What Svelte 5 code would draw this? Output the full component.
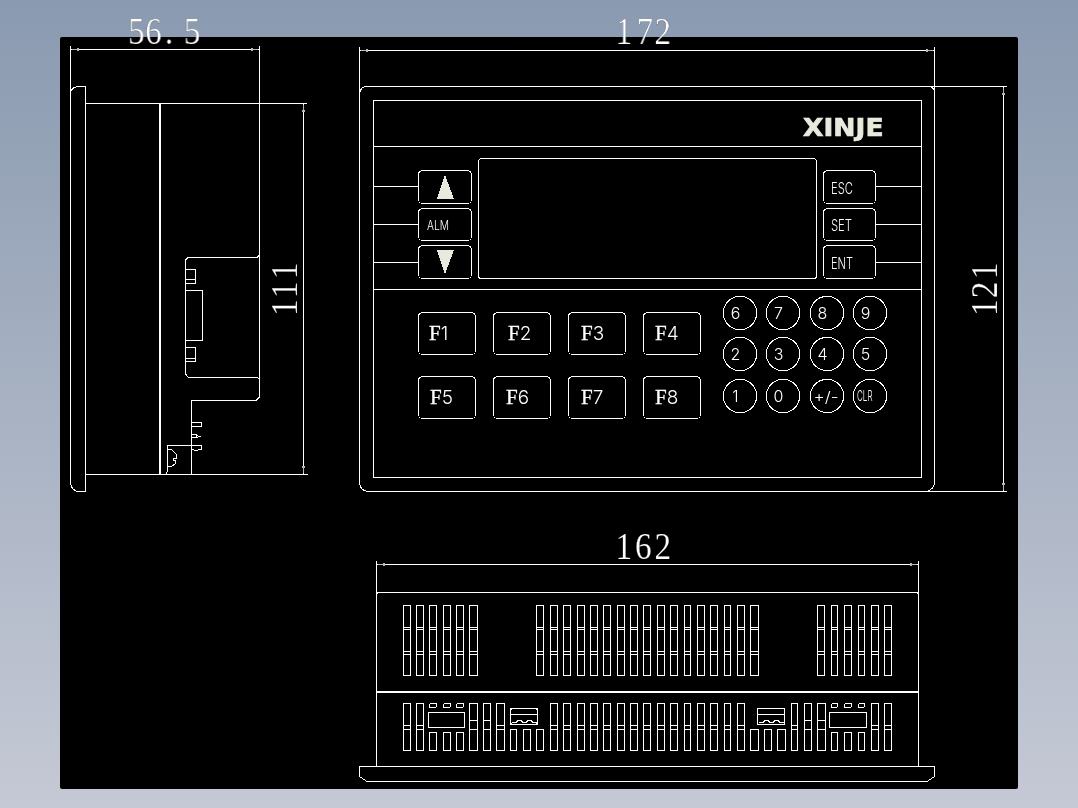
<script>
	// pixel columns [left, right] of the vent slots, read off the drawing
	const leftVents = [[403,410],[416,423],[429,436],[443,450],[456,463],[469,477]];
	const midVents = [[536,543],[550,557],[563,570],[577,584],[590,597],[603,610],[617,624],[630,637],[643,650],[657,664],[670,677],[684,690],[697,704],[710,717],[724,730],[737,744],[750,758]];
	const rightVents = [[817,824],[831,837],[844,851],[858,864],[871,878],[884,891]];
	const topVents = [...leftVents, ...midVents, ...rightVents];

	// lower row: tall slots with two bars each
	const lowSlots = [
		[403,410,725],[416,423,725],
		[469,477,720],[483,490,720],[496,504,725],
		...midVents.slice(1, 16).map(([a, b]) => [a, b, 725]),
		[791,797,725],[804,811,720],[817,825,720],
		[871,878,725],[884,891,725]
	];
	const shortSlots = [
		[429,436,732],[443,450,732],[456,463,732],
		[510,516,729],[523,530,729],[536,543,729],
		[750,758,729],[764,771,729],[777,785,729],
		[831,837,732],[844,851,732],[858,864,732]
	];
	const leds = [[429,436],[443,450],[456,463],[831,837],[844,851],[858,864]];

	const sideKeys = [
		{ x: 418, w: 53, y: 170, h: 33 },
		{ x: 418, w: 53, y: 208, h: 32 },
		{ x: 418, w: 53, y: 245, h: 33 },
		{ x: 823, w: 52, y: 170, h: 33 },
		{ x: 823, w: 52, y: 208, h: 32 },
		{ x: 823, w: 52, y: 245, h: 33 }
	];
	const sideLabels = [
		{ t: 'ALM', x: 427, y: 229.5, len: 22, cls: 'small' },
		{ t: 'ESC', x: 831, y: 193.5, len: 22, cls: '' },
		{ t: 'SET', x: 831, y: 230.5, len: 21, cls: '' },
		{ t: 'ENT', x: 831, y: 268.5, len: 22, cls: '' }
	];

	const fKeys = [
		{ n: 1, x: 418, y: 312, tx: 429 },
		{ n: 2, x: 493, y: 312, tx: 508 },
		{ n: 3, x: 568, y: 312, tx: 581 },
		{ n: 4, x: 643, y: 312, tx: 655 },
		{ n: 5, x: 418, y: 376, tx: 430 },
		{ n: 6, x: 493, y: 376, tx: 506 },
		{ n: 7, x: 568, y: 376, tx: 581 },
		{ n: 8, x: 643, y: 376, tx: 655 }
	];

	const padX = [740, 783, 827, 870];
	const padY = [313, 354, 396];
	const padRows = [
		['6', '7', '8', '9'],
		['2', '3', '4', '5'],
		['1', '0', '+/-', 'CLR']
	];
</script>

<div class="viewport">
	<svg class="drawing" viewBox="60 37 958 752" width="958" height="752">
		<!-- side view -->
		<g class="line">
			<path d="M70.5 46V483Q71 489 77 491.5H85.5V86.5H77Q71 88 70.5 93" />
			<path d="M85.5 103.5H307M85.5 474.5H308" />
			<path d="M259.5 46V397L256 400.5H191.5V474" />
			<path d="M259.5 255L257 257.5H188L185.5 260V374L188.5 377.5H257L259.5 379" />
			<path d="M185.5 269.5H195.5V283.5H185.5M185.5 279.5H195.5" />
			<path d="M185.5 290.5H202.5V340.5H185.5" />
			<path d="M185.5 347.5H195.5V361.5H185.5M185.5 358.5H195.5" />
			<path d="M191.5 422.5H201.5V426.5H191.5" />
			<path d="M191.5 434.5H196.5V437.5H191.5M196.5 435.5L199.5 436.5L196.5 437.5" />
			<path d="M190.5 445.5H167.5V471L166 474" />
			<path d="M191.5 445.5H201.5V449L196 450.5L191.5 449.5" />
			<path d="M167.5 449.5L172 450L176 454L176.5 458H173V460H176L175 464L171 466.5H167.5" />
		</g>
		<rect class="solid" x="159" y="103" width="2" height="371" />

		<!-- front view -->
		<g class="line">
			<path d="M359.5 47V484Q361 490 367 491.5H1006.5" />
			<path d="M359.5 94C360 89 363 86.5 367 86.5H1006.5" />
			<path d="M934.5 47V484Q933 489 928 491" />
			<path d="M931 86.5L934.5 90" />
			<rect x="373.5" y="100.5" width="548" height="377" />
			<path d="M373.5 146.5H921.5M373.5 289.5H921.5" />
			<path d="M373.5 186.5H418M373.5 224.5H418M373.5 262.5H418" />
			<path d="M876 186.5H921.5M876 224.5H921.5M876 262.5H921.5" />
			<rect x="478.5" y="158.5" width="338" height="120" rx="3" />
			{#each sideKeys as k}
				<rect x={k.x + 0.5} y={k.y + 0.5} width={k.w} height={k.h} rx="4" />
			{/each}
			{#each fKeys as k}
				<rect x={k.x + 0.5} y={k.y + 0.5} width="57" height="42" rx="4" />
			{/each}
			{#each padY as y}
				{#each padX as x}
					<circle cx={x} cy={y} r="16.7" />
				{/each}
			{/each}
		</g>
		<polygon class="ink" points="445,175 437,199 454,199" />
		<polygon class="ink" points="437,250 454,250 445,274" />
		<text class="brand" x="803" y="135.5" textLength="80.5" lengthAdjust="spacingAndGlyphs">XINJE</text>

		{#each sideLabels as l}
			<text class="keytext {l.cls}" x={l.x} y={l.y} textLength={l.len} lengthAdjust="spacingAndGlyphs">{l.t}</text>
		{/each}
		{#each fKeys as k}
			<text class="fkey" x={k.tx} y={k.y + 28}><tspan class="fk-f">F</tspan><tspan class="fk-n">{k.n}</tspan></text>
		{/each}
		{#each padRows as row, r}
			{#each row as label, c}
				{#if label === '+/-'}
					<text class="padtext" x="813.5" y={padY[r] + 5.5} textLength="25" lengthAdjust="spacingAndGlyphs">{label}</text>
				{:else if label === 'CLR'}
					<text class="padtext" x="857" y={padY[r] + 5} textLength="15.5" lengthAdjust="spacingAndGlyphs">{label}</text>
				{:else}
					<text class="padtext mid" x={padX[c] - 4.5} y={padY[r] + 6}>{label}</text>
				{/if}
			{/each}
		{/each}

		<!-- bottom view -->
		<g class="line">
			<path d="M376.5 561V766M918.5 561V766" />
			<path d="M378 592.5H917" />
			<path d="M376.5 594L378 592.5M917 592.5L918.5 594" />
			<path d="M359.5 766.5H934.5V776.5L927 781.5H367L359.5 776.5Z" />
			{#each topVents as [a, b]}
				<rect x={a + 0.5} y="605.5" width={b - a} height="70" />
				<path d="M{a} 627.5H{b + 1}M{a} 629.5H{b + 1}M{a} 651.5H{b + 1}M{a} 654.5H{b + 1}" />
			{/each}
			{#each lowSlots as [a, b, bar]}
				<rect x={a + 0.5} y="703.5" width={b - a} height="47" rx="1" />
				<path d="M{a} {bar + 0.5}H{b + 1}M{a} 729.5H{b + 1}" />
			{/each}
			{#each shortSlots as [a, b, top]}
				<rect x={a + 0.5} y={top + 0.5} width={b - a} height={750 - top} />
			{/each}
			{#each leds as [a, b]}
				<rect x={a + 0.5} y="703.5" width={b - a} height="4" rx="1.5" />
			{/each}
			<rect x="428.5" y="712.5" width="36" height="15" />
			<rect x="829.5" y="712.5" width="37" height="15" />
			<path d="M512 722.5H516L518 720.5H521L523 722.5H526L528 720.5H531L533 722.5H537" />
			<path d="M759 722.5H763L765 720.5H768L770 722.5H773L775 720.5H778L780 722.5H784" />
			<path d="M511 714.5H537M758 714.5H784" />
		</g>
		<rect class="usb" x="510.5" y="708.5" width="27" height="16" rx="2" />
		<rect class="usb" x="757.5" y="708.5" width="27" height="16" />
		<rect class="solid" x="377" y="691" width="541" height="2" />

		<!-- dimensions -->
		<g class="line">
			<path d="M71 49.5H259" />
			<path d="M360 50.5H934" />
			<path d="M377 564.5H918" />
			<path d="M303.5 104V474" />
			<path d="M1003.5 87V491" />
		</g>
		<g class="arrow">
			<polygon points="72,49.5 79,48 79,51" />
			<polygon points="258,49.5 251,48 251,51" />
			<polygon points="361,50.5 368,49 368,52" />
			<polygon points="933,50.5 926,49 926,52" />
			<polygon points="378,564.5 385,563 385,566" />
			<polygon points="917,564.5 910,563 910,566" />
			<polygon points="303.5,105 302,112 305,112" />
			<polygon points="303.5,473 302,466 305,466" />
			<polygon points="1003.5,88 1002,95 1005,95" />
			<polygon points="1003.5,490 1002,483 1005,483" />
		</g>
		<text class="dim" transform="translate(128 44) scale(.9 1)" x="0 19 41 62">56.5</text>
		<text class="dim" transform="translate(615.5 44) scale(.9 1)" x="0 23.3 43.3">172</text>
		<text class="dim" transform="translate(615.5 559) scale(.9 1)" x="0 21.7 43.3">162</text>
		<text class="dim" transform="translate(297 316) rotate(-90) scale(.9 1)" x="0 19.7 40.8">111</text>
		<text class="dim" transform="translate(997 316) rotate(-90) scale(.9 1)" x="0 19.7 40.8">121</text>
	</svg>
</div>

<style>
	:global(body) {
		margin: 0;
		min-height: 808px;
		background: linear-gradient(#8a9ab0, #c5c9d5);
	}

	.viewport {
		width: 958px;
		height: 752px;
		margin-left: 60px;
		position: relative;
		top: 37px;
		background: #000;
		border-radius: 2px;
	}

	.drawing {
		display: block;
		overflow: visible;
		shape-rendering: crispEdges;
		will-change: transform;
	}

	.line {
		fill: none;
		stroke: #fff;
		stroke-width: 1;
	}

	.solid {
		fill: #fff;
	}

	.usb {
		fill: none;
		stroke: #fff;
		stroke-width: 1.5;
	}

	.ink {
		fill: #e9e9dd;
	}

	.arrow polygon {
		fill: #b9b9ad;
	}

	.brand {
		font-family: "DejaVu Sans", sans-serif;
		font-weight: 700;
		font-size: 24px;
		fill: #e9e9dd;
		stroke: #e9e9dd;
		stroke-width: 0.7px;
	}

	.keytext {
		font-family: Inter, "Liberation Sans", sans-serif;
		font-weight: 300;
		font-size: 16px;
		fill: #fff;
	}

	.keytext.small {
		font-size: 13px;
	}

	.fkey {
		fill: #fff;
	}

	.fk-f {
		font-family: "Liberation Serif", serif;
		font-size: 21px;
		stroke: #fff;
		stroke-width: 0.3px;
	}

	.fk-n {
		font-family: Inter, "Liberation Sans", sans-serif;
		font-weight: 300;
		font-size: 19px;
	}

	.padtext {
		font-family: Inter, "Liberation Sans", sans-serif;
		font-weight: 300;
		font-size: 15px;
		fill: #fff;
	}

	.padtext.mid {
		text-anchor: middle;
		font-size: 16px;
	}

	.dim {
		font-family: "Liberation Serif", serif;
		font-size: 37px;
		fill: #fff;
		stroke: #000;
		stroke-width: 0.2px;
	}
</style>
